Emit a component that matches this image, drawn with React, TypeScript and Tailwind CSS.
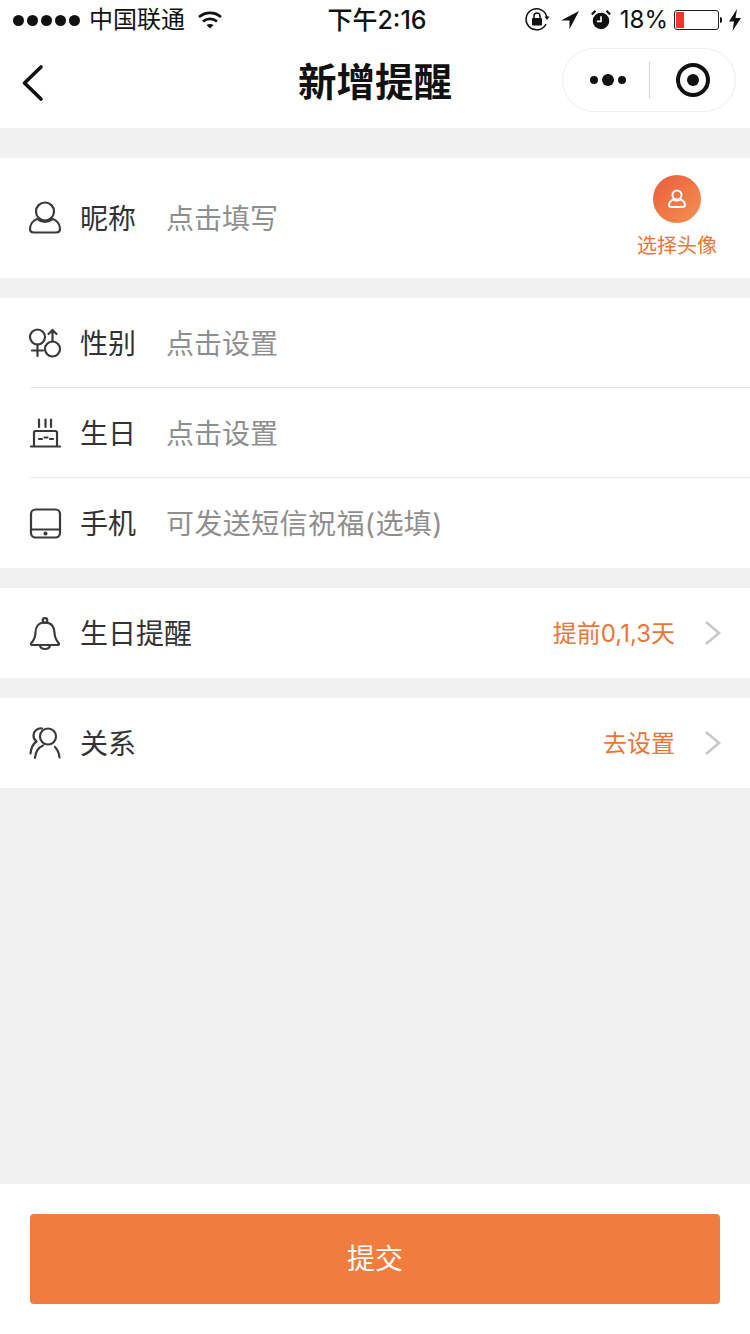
import type { ReactNode } from "react";

const CJK = "font-['Inter','Noto_Sans_CJK_SC',sans-serif]";

function Svg({ children }: { children: ReactNode }) {
  return (
    <svg viewBox="0 0 60 60" className="mx-[-15px] mt-[4px] h-[60px] w-[60px] shrink-0" fill="none" stroke="#3a3a3a" strokeWidth="2.200" strokeLinecap="round" strokeLinejoin="round">
      {children}
    </svg>
  );
}

const PersonIcon = () => (
  <Svg>
    <circle cx="30" cy="21.500" r="9" />
    <path d="M22 29c-4 1.500-7 5.500-7 10 0 2.500 1.500 3.500 4 3.500h22c2.500 0 4-1 4-3.500 0-4.500-3-8.500-7-10-2.500 2-5 3-8 3s-5.500-1-8-3z" />
  </Svg>
);

const GenderIcon = () => (
  <Svg>
    <circle cx="22.500" cy="22" r="7.500" />
    <path d="M22.500 29.500V41M17 35.500h11" />
    <circle cx="37.500" cy="34" r="7.500" />
    <path d="M37.500 26.500V15M33.500 19l4-4 4 4" />
  </Svg>
);

const CakeIcon = () => (
  <Svg>
    <path d="M16 41.500h29M19 41V27.500c0-1 .5-1.500 1.500-1.500h20c1 0 1.500.5 1.500 1.500V41" />
    <path d="M24 14.500v7.500M30.500 14.500v7.500M36 14.500v7.500" />
    <path d="M24 34h3M29.500 32.500h3M35 34h3" />
  </Svg>
);

const TabletIcon = () => (
  <Svg>
    <rect x="16" y="14.500" width="29" height="28" rx="4.500" />
    <path d="M16 34.500h29" />
    <circle cx="30.500" cy="38.500" r="1" fill="#3a3a3a" />
  </Svg>
);

const BellIcon = () => (
  <Svg>
    <circle cx="30" cy="15.500" r="2.300" />
    <path d="M30 17.500c-6.500 0-9.500 4.500-9.500 10 0 6-2 8-4.500 11 0 1 .5 1.500 1.500 1.500h25c1 0 1.500-.5 1.500-1.500-2.500-3-4.500-5-4.500-11 0-5.500-3-10-9.500-10z" />
    <path d="M25 40.500c.5 2.500 2.500 3.500 5 3.500s4.500-1 5-3.500" />
  </Svg>
);

const PeopleIcon = () => (
  <Svg>
    <circle cx="33" cy="21.500" r="8" />
    <path d="M27 13.500c-4.500-.5-8.500 2.500-8.500 7 0 2.500 1 4.500 3 6-3.500 2.500-5.500 7-6 12" />
    <path d="M28 30.500c-4.500 2-7.500 6.500-8 12.500M40 32c2.500 2.500 4 6 4.500 10.500" />
  </Svg>
);

function Chevron() {
  return (
    <svg viewBox="0 0 18 26" className="ml-[29px] h-[26px] w-[18px]" fill="none" stroke="#c8c8c8" strokeWidth="2.600">
      <path d="M2 2l13 11L2 24" />
    </svg>
  );
}

function StatusBar() {
  return (
    <div className="grid h-[40px] grid-cols-[1fr_auto_1fr] items-center pl-[13px] pr-[9px] text-[#111]">
      <div className="flex items-center">
        <div className="flex gap-[3px]">
          {[0, 1, 2, 3, 4].map((i) => (
            <span key={i} className="h-[11px] w-[11px] rounded-full bg-[#111]" />
          ))}
        </div>
        <span className="ml-[9px] text-[24px] leading-[30px]">中国联通</span>
        <svg viewBox="0 0 26 20" className="ml-[12px] h-[20px] w-[26px]" fill="none" stroke="#111" strokeWidth="2.600">
          <path d="M2 7c6.500-5.500 15.500-5.500 22 0M6 11.500c4-3.500 10-3.500 14 0" />
          <path d="M9.500 15c2-1.500 5-1.500 7 0L13 18.500z" fill="#111" stroke="none" />
        </svg>
      </div>
      <span className="text-[25px] font-medium leading-[30px]">下午2:16</span>
      <div className="flex items-center justify-end">
        <svg viewBox="0 0 26 26" className="h-[26px] w-[26px]" fill="none" stroke="#111" strokeWidth="1.500">
          <path d="M22 17a10.500 10.500 0 1 1 1-6" />
          <path d="M20.500 9.500h5L23 13z" fill="#111" stroke="none" />
          <rect x="8" y="11" width="10" height="7.500" rx="1" fill="#111" stroke="none" />
          <path d="M10 11V9a3 3 0 0 1 6 0v2" />
        </svg>
        <svg viewBox="0 0 20 20" className="ml-[10px] h-[20px] w-[20px]">
          <path d="M19 1L9.500 19V10.500H1z" fill="#111" />
        </svg>
        <svg viewBox="0 0 24 24" className="ml-[10px] h-[24px] w-[22px]">
          <circle cx="12" cy="13" r="9" fill="#111" />
          <path d="M12 8v5.500H7.500" fill="none" stroke="#fff" strokeWidth="1.800" />
          <path d="M2 6l4-4M22 6l-4-4" stroke="#111" strokeWidth="2.400" />
        </svg>
        <span className="ml-[8px] text-[24px] leading-[30px]">18%</span>
        <div className="ml-[6px] h-[20px] w-[45px] rounded-[3px] border border-[#222] p-[1px]">
          <div className="h-full w-[8px] bg-[#f5342c]" />
        </div>
        <div className="ml-[1px] h-[6px] w-[2px] rounded-r-full bg-[#111]" />
        <svg viewBox="0 0 12 22" className="ml-[7px] h-[22px] w-[12px]">
          <path d="M8 0L0 12.500h5L3.500 22 12 9H6.500z" fill="#111" />
        </svg>
      </div>
    </div>
  );
}

function NavBar() {
  return (
    <div className="grid h-[88px] grid-cols-[1fr_auto_1fr] items-center bg-white pb-[8px]">
      <svg viewBox="0 0 24 38" className="ml-[21px] mt-[6px] h-[38px] w-[24px]" fill="none" stroke="#111" strokeWidth="3.600" strokeLinecap="round" strokeLinejoin="round">
        <path d="M20 3L3.500 19 20 35" />
      </svg>
      <h1 className="mt-[4px] text-[38.500px] font-bold leading-none text-[#111]">新增提醒</h1>
      <div className="mr-[14px] flex h-[64px] w-[174px] items-center justify-self-end rounded-full border border-[#efefef] bg-white">
        <div className="flex w-[86px] items-center justify-center gap-[4px] pl-[3px]">
          <span className="h-[8px] w-[8px] rounded-full bg-[#111]" />
          <span className="h-[12px] w-[12px] rounded-full bg-[#111]" />
          <span className="h-[8px] w-[8px] rounded-full bg-[#111]" />
        </div>
        <div className="h-[38px] w-px bg-[#d8d8d8]" />
        <div className="flex flex-1 items-center justify-center">
          <div className="flex h-[34px] w-[34px] items-center justify-center rounded-full border-[4px] border-[#111]">
            <span className="h-[12px] w-[12px] rounded-full bg-[#111]" />
          </div>
        </div>
      </div>
    </div>
  );
}

function Row({ icon, label, placeholder, divider }: { icon: ReactNode; label: string; placeholder: ReactNode; divider?: boolean }) {
  return (
    <div className="pl-[30px]">
      <div className={`flex h-[90px] items-center ${divider ? "border-b border-[#e8e8e8]" : ""}`}>
        {icon}
        <span className="ml-[20px] w-[86px] pt-[2px] text-[28px] text-[#333]">{label}</span>
        <span className="pt-[2px] text-[28px] text-[#8f8f8f]">{placeholder}</span>
      </div>
    </div>
  );
}

function LinkRow({ icon, label, value }: { icon: ReactNode; label: string; value: string }) {
  return (
    <div className="flex h-[90px] items-center bg-white pl-[30px] pr-[28px]">
      {icon}
      <span className="ml-[20px] pt-[2px] text-[28px] text-[#333]">{label}</span>
      <span className="ml-auto pt-[1px] text-[24px] text-[#ee7436]">{value}</span>
      <Chevron />
    </div>
  );
}

export default function App() {
  return (
    <div className={`flex h-[1334px] w-[750px] flex-col overflow-hidden bg-[#f1f1f1] ${CJK}`}>
      <div className="bg-white">
        <StatusBar />
        <NavBar />
      </div>

      <section className="mt-[30px] flex h-[120px] items-center bg-white pl-[30px] pr-[33px]">
        <PersonIcon />
        <span className="ml-[20px] w-[86px] pt-[2px] text-[28px] text-[#333]">昵称</span>
        <span className="pt-[2px] text-[28px] text-[#8f8f8f]">点击填写</span>
        <div className="ml-auto flex flex-col items-center">
          <div className="flex h-[48px] w-[48px] items-center justify-center rounded-full bg-gradient-to-br from-[#ea5b3c] to-[#f39152]">
            <svg viewBox="0 0 24 24" className="h-[24px] w-[24px]" fill="none" stroke="#fff" strokeWidth="2">
              <circle cx="12" cy="8" r="4.500" />
              <path d="M8.500 12.500C6 13.500 4 15.500 4 18c0 1.500 1 2 2.500 2h11c1.500 0 2.500-.5 2.500-2 0-2.500-2-4.500-4.500-5.500-2.500 1.500-5 1.500-7 0z" />
            </svg>
          </div>
          <span className="mt-[9px] text-[20px] leading-[29px] text-[#ee7436]">选择头像</span>
        </div>
      </section>

      <section className="mt-[20px] bg-white">
        <Row icon={<GenderIcon />} label="性别" placeholder="点击设置" divider />
        <Row icon={<CakeIcon />} label="生日" placeholder="点击设置" divider />
        <Row icon={<TabletIcon />} label="手机" placeholder={<span className="tracking-[0.4px]">可发送短信祝福(选填)</span>} />
      </section>

      <section className="mt-[20px]">
        <LinkRow icon={<BellIcon />} label="生日提醒" value="提前0,1,3天" />
      </section>

      <section className="mt-[20px]">
        <LinkRow icon={<PeopleIcon />} label="关系" value="去设置" />
      </section>

      <footer className="mt-auto h-[150px] bg-white px-[30px] pt-[30px]">
        <button className="flex h-[90px] w-full items-center justify-center rounded-[4px] bg-[#f17c3e] text-[28px] text-white">提交</button>
      </footer>
    </div>
  );
}
